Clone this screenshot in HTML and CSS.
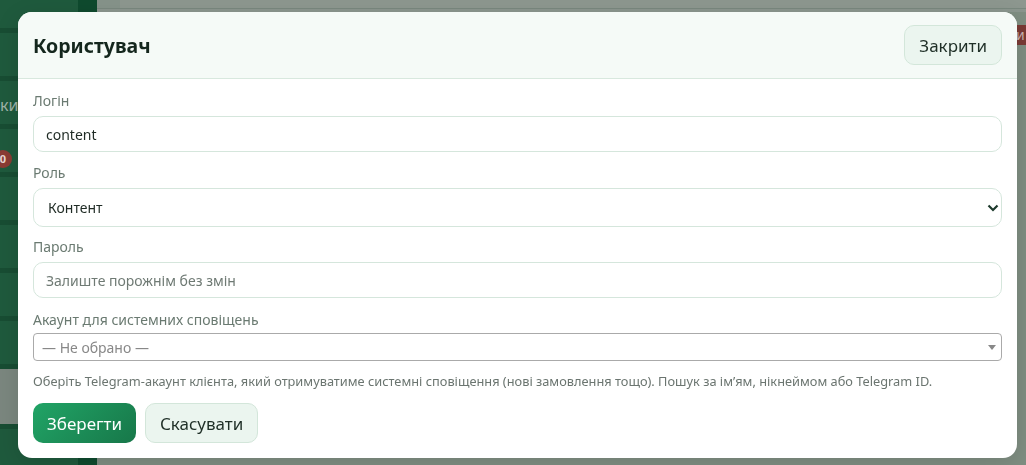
FILE: index.html
```html
<!DOCTYPE html>
<html lang="uk">
<head>
    <meta charset="UTF-8">
    <meta name="viewport" content="width=device-width, initial-scale=1.0">
    <title>Користувач</title>
    <link rel="stylesheet" href="styles.css">
</head>
<body>
    <div class="app">
        <aside class="sidebar">
            <div class="nav">
                <div class="nav-item"></div>
                <div class="nav-item"><span class="nav-text">ки</span></div>
                <div class="nav-item"><span class="badge">0</span></div>
                <div class="nav-item"></div>
                <div class="nav-item"></div>
                <div class="nav-item"></div>
                <div class="nav-item"></div>
                <div class="nav-item nav-active"></div>
                <div class="nav-item"></div>
            </div>
            <div class="nav-edge"></div>
        </aside>
        <main class="main">
            <div class="topbar"></div>
            <div class="content">
                <span class="tag">и</span>
            </div>
        </main>
    </div>

    <div class="overlay">
        <div class="modal">
            <div class="modal-header">
                <h2>Користувач</h2>
                <button class="btn btn-light btn-close">Закрити</button>
            </div>
            <form class="modal-body">
                <label for="login">Логін</label>
                <input type="text" id="login" class="field" value="content">

                <label for="role">Роль</label>
                <div class="select-wrap">
                    <select id="role" class="field field-select">
                        <option>Контент</option>
                    </select>
                    <svg class="chevron" width="12" height="8" viewBox="0 0 12 8"><path d="M1.5 1.5 6 6l4.5-4.5" fill="none" stroke="#1d3a2c" stroke-width="2.2"/></svg>
                </div>

                <label for="password">Пароль</label>
                <input type="password" id="password" class="field field-last" placeholder="Залиште порожнім без змін">

                <label class="label-combo">Акаунт для системних сповіщень</label>
                <div class="combo">
                    <span class="combo-text">— Не обрано —</span>
                    <span class="combo-arrow"></span>
                </div>
                <p class="hint">Оберіть Telegram-акаунт клієнта, який отримуватиме системні сповіщення (нові замовлення тощо). Пошук за ім’ям, нікнеймом або Telegram ID.</p>

                <div class="actions">
                    <button type="button" class="btn btn-primary">Зберегти</button>
                    <button type="button" class="btn btn-light">Скасувати</button>
                </div>
            </form>
        </div>
    </div>
</body>
</html>
```

FILE: styles.css
```css
* {
    box-sizing: border-box;
}
body {
    margin: 0;
    font-family: "Noto Sans", Arial, sans-serif;
    color: #1d2b24;
    overflow: hidden;
}
.app {
    display: flex;
    height: 465px;
}
.sidebar {
    width: 97px;
    display: flex;
    background-color: #1f5a3d;
}
.nav {
    width: 78px;
    padding-top: 28px;
}
.nav-item {
    position: relative;
    height: 48px;
    border-top: 5px solid #184d33;
}
.nav-active {
    background-color: #7b877f;
    height: 60px;
}
.nav-text {
    position: absolute;
    left: 0;
    top: 14px;
    font-size: 16px;
    line-height: 20px;
    color: #9fb3a8;
}
.badge {
    position: absolute;
    left: -6px;
    top: 21px;
    width: 18px;
    height: 18px;
    border-radius: 50%;
    background-color: #8b3b34;
    color: #e9d6d3;
    font-size: 11px;
    font-weight: bold;
    text-align: center;
    line-height: 18px;
}
.nav-edge {
    width: 19px;
    background-color: #0f4a2e;
}
.main {
    flex: 1;
    display: flex;
    flex-direction: column;
    background-color: #7f8e82;
}
.topbar {
    height: 9px;
    background: linear-gradient(90deg, #86938a 0, #86938a 23px, #8d978f 23px);
    border-bottom: 1px solid #79887e;
}
.content {
    position: relative;
    flex: 1;
    background: linear-gradient(#8b968e, #8b968e) 0 0 / 100% 3px no-repeat, #7f8e82;
}
.tag {
    position: absolute;
    right: 0;
    top: 16px;
    width: 10px;
    height: 20px;
    background-color: #7a3a35;
    color: #c9b2ae;
    font-size: 14px;
    line-height: 20px;
    overflow: hidden;
}

.overlay {
    position: fixed;
    inset: 0;
    padding: 12px 9px 7px 18px;
}
.modal {
    height: 446px;
    background-color: #ffffff;
    border-radius: 14px;
    overflow: hidden;
    box-shadow: 0 6px 24px rgba(0, 0, 0, 0.12);
}
.modal-header {
    height: 67px;
    display: flex;
    align-items: center;
    justify-content: space-between;
    padding: 0 15px;
    background-color: #f5faf7;
    border-bottom: 1px solid #d8e8de;
}
.modal-header h2 {
    margin: 0;
    font-size: 19.5px;
    font-weight: bold;
    color: #14261d;
}
.modal-body {
    display: flex;
    flex-direction: column;
    padding: 13px 15px 0;
}
label {
    font-size: 14px;
    line-height: 17px;
    color: #6a7a71;
    margin-bottom: 7px;
}
.field {
    width: 100%;
    height: 36px;
    padding: 0 12px;
    border: 1px solid #d5e6dc;
    border-radius: 10px;
    background-color: #ffffff;
    font-family: inherit;
    font-size: 14px;
    color: #1f2b25;
    margin-bottom: 12px;
}
.field::placeholder {
    color: #6f7a74;
}
.select-wrap {
    position: relative;
}
.field-select {
    display: block;
    height: 39px;
    appearance: none;
    padding-left: 14px;
    margin-bottom: 11px;
}
.field-last {
    margin-bottom: 13px;
}
.chevron {
    position: absolute;
    right: 3px;
    top: 16px;
}
.label-combo {
    margin-bottom: 5px;
}
.combo {
    position: relative;
    height: 28px;
    border: 1px solid #aaaaaa;
    border-radius: 4px;
    padding: 0 8px;
    display: flex;
    align-items: center;
}
.combo-text {
    font-size: 14px;
    color: #888888;
}
.combo-arrow {
    position: absolute;
    right: 5px;
    top: 11px;
    border-left: 4px solid transparent;
    border-right: 4px solid transparent;
    border-top: 5px solid #888888;
}
.hint {
    margin: 12px 0 14px;
    font-size: 12.8px;
    line-height: 16px;
    color: #6b7570;
}
.actions {
    display: flex;
    gap: 9px;
}
.btn {
    height: 40px;
    padding: 0 14px;
    border-radius: 10px;
    font-family: inherit;
    font-size: 17px;
    cursor: pointer;
}
.btn-primary {
    border: none;
    color: #ffffff;
    background: linear-gradient(135deg, #21a466, #177749);
}
.btn-light {
    border: 1px solid #d3e6da;
    background-color: #ebf5ef;
    color: #1f2f27;
}
.btn-close {
    height: 40px;
    padding: 0 14px;
}
```
